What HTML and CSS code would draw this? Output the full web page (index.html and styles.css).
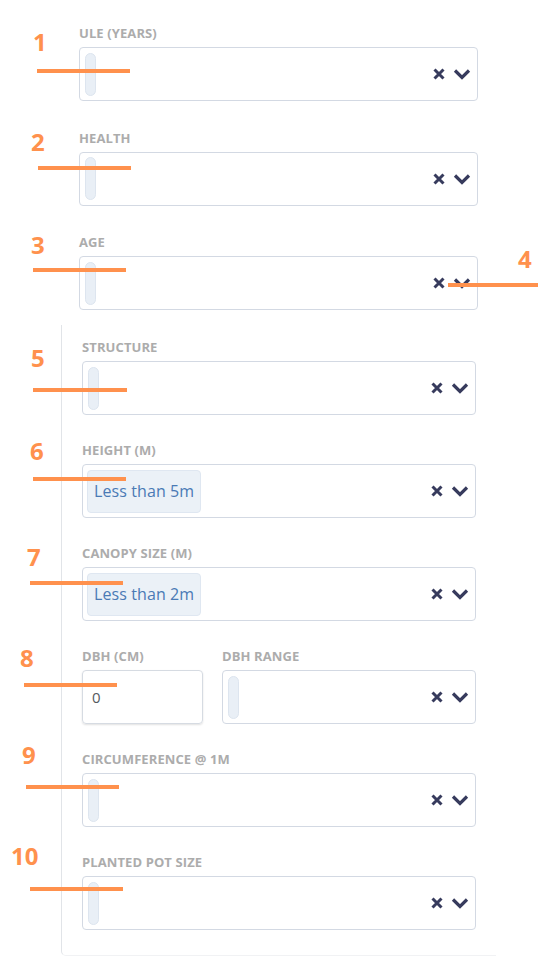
FILE: index.html
```html
<!DOCTYPE html>
<html>
<head>
<meta charset="utf-8">
<link rel="stylesheet" href="styles.css">
</head>
<body>
<div class="page">
  <div class="top-fields">
    <div class="field">
      <div class="label">ULE (YEARS)</div>
      <div class="select">
        <span class="ph"></span>
        <span class="icons">
          <svg class="ic-x" viewBox="0 0 12 12"><path d="M1.5 1.5L10.5 10.5M10.5 1.5L1.5 10.5"/></svg>
          <svg class="ic-v" viewBox="0 0 18 12"><path d="M2 2.5L9 9.5L16 2.5"/></svg>
        </span>
      </div>
    </div>
    <div class="field">
      <div class="label">HEALTH</div>
      <div class="select">
        <span class="ph"></span>
        <span class="icons">
          <svg class="ic-x" viewBox="0 0 12 12"><path d="M1.5 1.5L10.5 10.5M10.5 1.5L1.5 10.5"/></svg>
          <svg class="ic-v" viewBox="0 0 18 12"><path d="M2 2.5L9 9.5L16 2.5"/></svg>
        </span>
      </div>
    </div>
    <div class="field">
      <div class="label">AGE</div>
      <div class="select">
        <span class="ph"></span>
        <span class="icons">
          <svg class="ic-x" viewBox="0 0 12 12"><path d="M1.5 1.5L10.5 10.5M10.5 1.5L1.5 10.5"/></svg>
          <svg class="ic-v" viewBox="0 0 18 12"><path d="M2 2.5L9 9.5L16 2.5"/></svg>
        </span>
      </div>
    </div>
  </div>

  <div class="panel">
    <div class="field">
      <div class="label">STRUCTURE</div>
      <div class="select">
        <span class="ph"></span>
        <span class="icons">
          <svg class="ic-x" viewBox="0 0 12 12"><path d="M1.5 1.5L10.5 10.5M10.5 1.5L1.5 10.5"/></svg>
          <svg class="ic-v" viewBox="0 0 18 12"><path d="M2 2.5L9 9.5L16 2.5"/></svg>
        </span>
      </div>
    </div>
    <div class="field">
      <div class="label">HEIGHT (M)</div>
      <div class="select">
        <span class="chip">Less than 5m</span>
        <span class="icons">
          <svg class="ic-x" viewBox="0 0 12 12"><path d="M1.5 1.5L10.5 10.5M10.5 1.5L1.5 10.5"/></svg>
          <svg class="ic-v" viewBox="0 0 18 12"><path d="M2 2.5L9 9.5L16 2.5"/></svg>
        </span>
      </div>
    </div>
    <div class="field">
      <div class="label">CANOPY SIZE (M)</div>
      <div class="select">
        <span class="chip">Less than 2m</span>
        <span class="icons">
          <svg class="ic-x" viewBox="0 0 12 12"><path d="M1.5 1.5L10.5 10.5M10.5 1.5L1.5 10.5"/></svg>
          <svg class="ic-v" viewBox="0 0 18 12"><path d="M2 2.5L9 9.5L16 2.5"/></svg>
        </span>
      </div>
    </div>
    <div class="row">
      <div class="field">
        <div class="label">DBH (CM)</div>
        <div class="input">0</div>
      </div>
      <div class="field">
        <div class="label">DBH RANGE</div>
        <div class="select">
          <span class="ph"></span>
          <span class="icons">
            <svg class="ic-x" viewBox="0 0 12 12"><path d="M1.5 1.5L10.5 10.5M10.5 1.5L1.5 10.5"/></svg>
            <svg class="ic-v" viewBox="0 0 18 12"><path d="M2 2.5L9 9.5L16 2.5"/></svg>
          </span>
        </div>
      </div>
    </div>
    <div class="field">
      <div class="label">CIRCUMFERENCE @ 1M</div>
      <div class="select">
        <span class="ph"></span>
        <span class="icons">
          <svg class="ic-x" viewBox="0 0 12 12"><path d="M1.5 1.5L10.5 10.5M10.5 1.5L1.5 10.5"/></svg>
          <svg class="ic-v" viewBox="0 0 18 12"><path d="M2 2.5L9 9.5L16 2.5"/></svg>
        </span>
      </div>
    </div>
    <div class="field">
      <div class="label">PLANTED POT SIZE</div>
      <div class="select">
        <span class="ph"></span>
        <span class="icons">
          <svg class="ic-x" viewBox="0 0 12 12"><path d="M1.5 1.5L10.5 10.5M10.5 1.5L1.5 10.5"/></svg>
          <svg class="ic-v" viewBox="0 0 18 12"><path d="M2 2.5L9 9.5L16 2.5"/></svg>
        </span>
      </div>
    </div>
  </div>

  <div class="notes">
    <span class="num n1">1</span><span class="ln l1"></span>
    <span class="num n2">2</span><span class="ln l2"></span>
    <span class="num n3">3</span><span class="ln l3"></span>
    <span class="num n4">4</span><span class="ln l4"></span>
    <span class="num n5">5</span><span class="ln l5"></span>
    <span class="num n6">6</span><span class="ln l6"></span>
    <span class="num n7">7</span><span class="ln l7"></span>
    <span class="num n8">8</span><span class="ln l8"></span>
    <span class="num n9">9</span><span class="ln l9"></span>
    <span class="num n10">10</span><span class="ln l10"></span>
  </div>
</div>
</body>
</html>
```

FILE: styles.css
```css
html, body {
  margin: 0;
  padding: 0;
  background: #ffffff;
}
body {
  font-family: "Open Sans", "Liberation Sans", sans-serif;
  width: 547px;
  height: 957px;
  overflow: hidden;
}
.page {
  position: relative;
  width: 547px;
  height: 957px;
}

.top-fields {
  display: flex;
  flex-direction: column;
  gap: 29.5px;
  padding: 26px 0 0 79px;
  width: 399px;
  margin-bottom: 15px;
}

.panel {
  margin-left: 61px;
  width: 394px;
  padding: 15px 20px 25px 20px;
  border-left: 1px solid #e1e4e8;
  border-bottom: 1px solid #f1f2f4;
  border-bottom-left-radius: 5px;
  display: flex;
  flex-direction: column;
  gap: 28px;
}

.field {
  display: flex;
  flex-direction: column;
}
.label {
  font-size: 13px;
  line-height: 14px;
  font-weight: 700;
  letter-spacing: 0.1px;
  color: #acacac;
  margin-bottom: 7px;
  white-space: nowrap;
}

.select {
  box-sizing: border-box;
  height: 54px;
  border: 1px solid #d3d9e3;
  border-radius: 4px;
  display: flex;
  align-items: center;
  padding: 0 6px 0 5px;
  background: #fff;
}
.ph {
  box-sizing: border-box;
  width: 11px;
  height: 43px;
  background: #e9eff6;
  border: 1px solid #dde5ef;
  border-radius: 6px;
}
.chip {
  box-sizing: border-box;
  height: 43px;
  display: flex;
  align-items: center;
  padding: 0 6px;
  margin-left: -1px;
  background: #ebf1f7;
  border: 1px solid #dfe7f1;
  border-radius: 4px;
  color: #4a7ab5;
  font-size: 16px;
  letter-spacing: 0.1px;
}
.icons {
  margin-left: auto;
  display: flex;
  align-items: center;
  gap: 8px;
}
.icons svg {
  display: block;
  fill: none;
  stroke: #373b5d;
}
.ic-x {
  width: 12px;
  height: 12px;
  stroke-width: 3;
}
.ic-v {
  width: 18px;
  height: 12px;
  stroke-width: 3.2;
}

.row {
  display: grid;
  grid-template-columns: 121px 1fr;
  column-gap: 19px;
}
.input {
  box-sizing: border-box;
  height: 54px;
  border: 1px solid #d6dbe2;
  border-radius: 4px;
  box-shadow: 0 1px 2px rgba(0, 0, 0, 0.12);
  display: flex;
  align-items: center;
  padding-left: 9px;
  font-size: 15px;
  color: #555a60;
}

/* annotation overlay */
.notes {
  position: absolute;
  inset: 0;
  pointer-events: none;
}
.num {
  position: absolute;
  font-family: "Open Sans", "Liberation Sans", sans-serif;
  font-weight: 700;
  font-size: 24px;
  line-height: 24px;
  color: #ff914d;
}
.ln {
  position: absolute;
  height: 4px;
  width: 93px;
  background: #ff914d;
}
.n1 { left: 33px; top: 30px; }
.n2 { left: 31px; top: 130px; }
.n3 { left: 31px; top: 233px; }
.n4 { left: 518px; top: 247px; }
.n5 { left: 31px; top: 346px; }
.n6 { left: 30px; top: 439px; }
.n7 { left: 27px; top: 545px; }
.n8 { left: 20px; top: 646px; }
.n9 { left: 22px; top: 743px; }
.n10 { left: 11px; top: 844px; }

.l1 { left: 37px; top: 69px; }
.l2 { left: 38px; top: 166px; }
.l3 { left: 33px; top: 268px; }
.l4 { left: 448px; top: 283px; width: 90px; }
.l5 { left: 33px; top: 388px; width: 94px; }
.l6 { left: 33px; top: 477px; }
.l7 { left: 30px; top: 581px; }
.l8 { left: 24px; top: 683px; }
.l9 { left: 26px; top: 785px; }
.l10 { left: 30px; top: 887px; }
```
